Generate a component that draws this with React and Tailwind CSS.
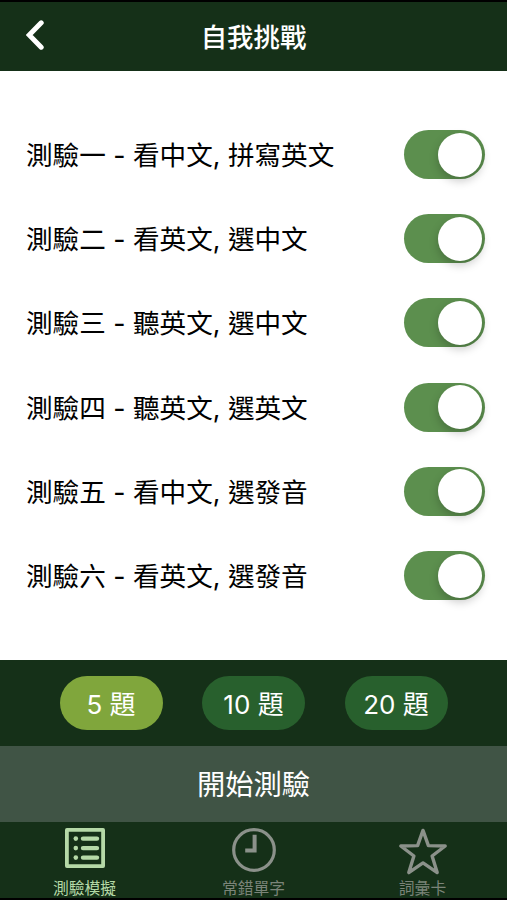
import React, { useState } from "react";

const quizzes = [
  "測驗一 - 看中文, 拼寫英文",
  "測驗二 - 看英文, 選中文",
  "測驗三 - 聽英文, 選中文",
  "測驗四 - 聽英文, 選英文",
  "測驗五 - 看中文, 選發音",
  "測驗六 - 看英文, 選發音",
];

const counts = [5, 10, 20];

function Toggle({ on, onClick, label }) {
  return (
    <button
      type="button"
      role="switch"
      aria-checked={on}
      aria-label={label}
      onClick={onClick}
      className={`flex h-[49px] w-[81px] items-center rounded-full px-[3px] ${
        on ? "justify-end bg-[#5c8f4e]" : "justify-start bg-gray-300"
      }`}
    >
      <span className="size-[44px] rounded-full bg-white shadow-[0_4px_10px_rgba(0,0,0,0.22)]"></span>
    </button>
  );
}

function ListIcon() {
  return (
    <svg width="40" height="40" viewBox="0 0 40 40" fill="none" stroke="currentColor">
      <rect x="1.9" y="1.9" width="36.2" height="36.2" strokeWidth="3.8" strokeLinejoin="round" />
      <path d="M18 10.6h14M18 20.1h14M18 29.6h14" strokeWidth="4.4" strokeLinecap="round" />
      <g fill="currentColor" stroke="none">
        <circle cx="10.8" cy="10.6" r="2.3" />
        <circle cx="10.8" cy="20.1" r="2.3" />
        <circle cx="10.8" cy="29.6" r="2.3" />
      </g>
    </svg>
  );
}

function ClockIcon() {
  return (
    <svg width="44" height="44" viewBox="0 0 44 44" fill="none" stroke="currentColor">
      <circle cx="22" cy="22" r="20.3" strokeWidth="3.2" />
      <path d="M22.6 6.8v15.7H13.2" strokeWidth="4" />
    </svg>
  );
}

function StarIcon() {
  return (
    <svg width="50" height="48" viewBox="0 0 50 48" fill="none" stroke="currentColor">
      <path
        d="M25 2.4L30.4 17.6L47.2 18L34.1 28L39.2 44.6L25 34.9L10.8 44.6L15.9 28L2.8 18L19.6 17.6Z"
        strokeWidth="3.4"
        strokeLinejoin="round"
      />
    </svg>
  );
}

const tabs = [
  { name: "測驗模擬", icon: <ListIcon /> },
  { name: "常錯單字", icon: <ClockIcon /> },
  { name: "詞彙卡", icon: <StarIcon /> },
];

export default function App() {
  const [enabled, setEnabled] = useState(quizzes.map(() => true));
  const [count, setCount] = useState(5);
  const [tab, setTab] = useState(0);

  function toggleQuiz(index) {
    setEnabled(enabled.map((on, i) => (i === index ? !on : on)));
  }

  return (
    <div className="flex h-[900px] w-[507px] flex-col overflow-hidden border-y-2 border-black bg-[#153018] font-['Inter','Noto_Sans_CJK_TC',sans-serif] text-white">
      <header className="grid h-[69px] shrink-0 grid-cols-[1fr_auto_1fr] items-center">
        <button type="button" aria-label="返回" className="pb-1 pl-[26px]">
          <svg width="18" height="30" viewBox="0 0 18 30" fill="none" stroke="currentColor">
            <path d="M15.2 2.8L3.2 15L15.2 27.2" strokeWidth="5" strokeLinecap="round" />
          </svg>
        </button>
        <h1 className="text-[26.4px] leading-[40px] font-medium">自我挑戰</h1>
      </header>

      <main className="h-[589px] shrink-0 bg-white pt-[41.5px] text-black">
        {quizzes.map((quiz, i) => (
          <div key={quiz} className="flex h-[84.2px] items-center justify-between pr-[22px] pl-[26px]">
            <span className="pt-px text-[26.6px] leading-[40px] whitespace-nowrap">{quiz}</span>
            <Toggle on={enabled[i]} onClick={() => toggleQuiz(i)} label={quiz} />
          </div>
        ))}
      </main>

      <div className="flex h-[86px] shrink-0 justify-center gap-[39.5px] pt-4">
        {counts.map((n) => (
          <button
            key={n}
            type="button"
            onClick={() => setCount(n)}
            className={`h-[54px] w-[103px] rounded-full pt-[3px] text-[26px] leading-[51px] ${
              n === count ? "bg-[#80a63c]" : "bg-[#28602d]"
            }`}
          >
            {n} 題
          </button>
        ))}
      </div>

      <button type="button" className="h-[76px] shrink-0 bg-[#405445] pt-[3px] text-[28.3px] leading-[73px]">
        開始測驗
      </button>

      <nav className="grid h-[76px] shrink-0 grid-cols-3">
        {tabs.map((t, i) => (
          <button
            key={t.name}
            type="button"
            onClick={() => setTab(i)}
            className={`flex flex-col items-center pt-[6px] ${
              i === tab ? "text-[#b5d9a7]" : "text-[#8b918a]"
            }`}
          >
            <span className="flex h-[49px] items-start">{t.icon}</span>
            <span className={`text-[15.8px] leading-[24px] ${i === tab ? "" : "text-[#7b8479]"}`}>
              {t.name}
            </span>
          </button>
        ))}
      </nav>
    </div>
  );
}
